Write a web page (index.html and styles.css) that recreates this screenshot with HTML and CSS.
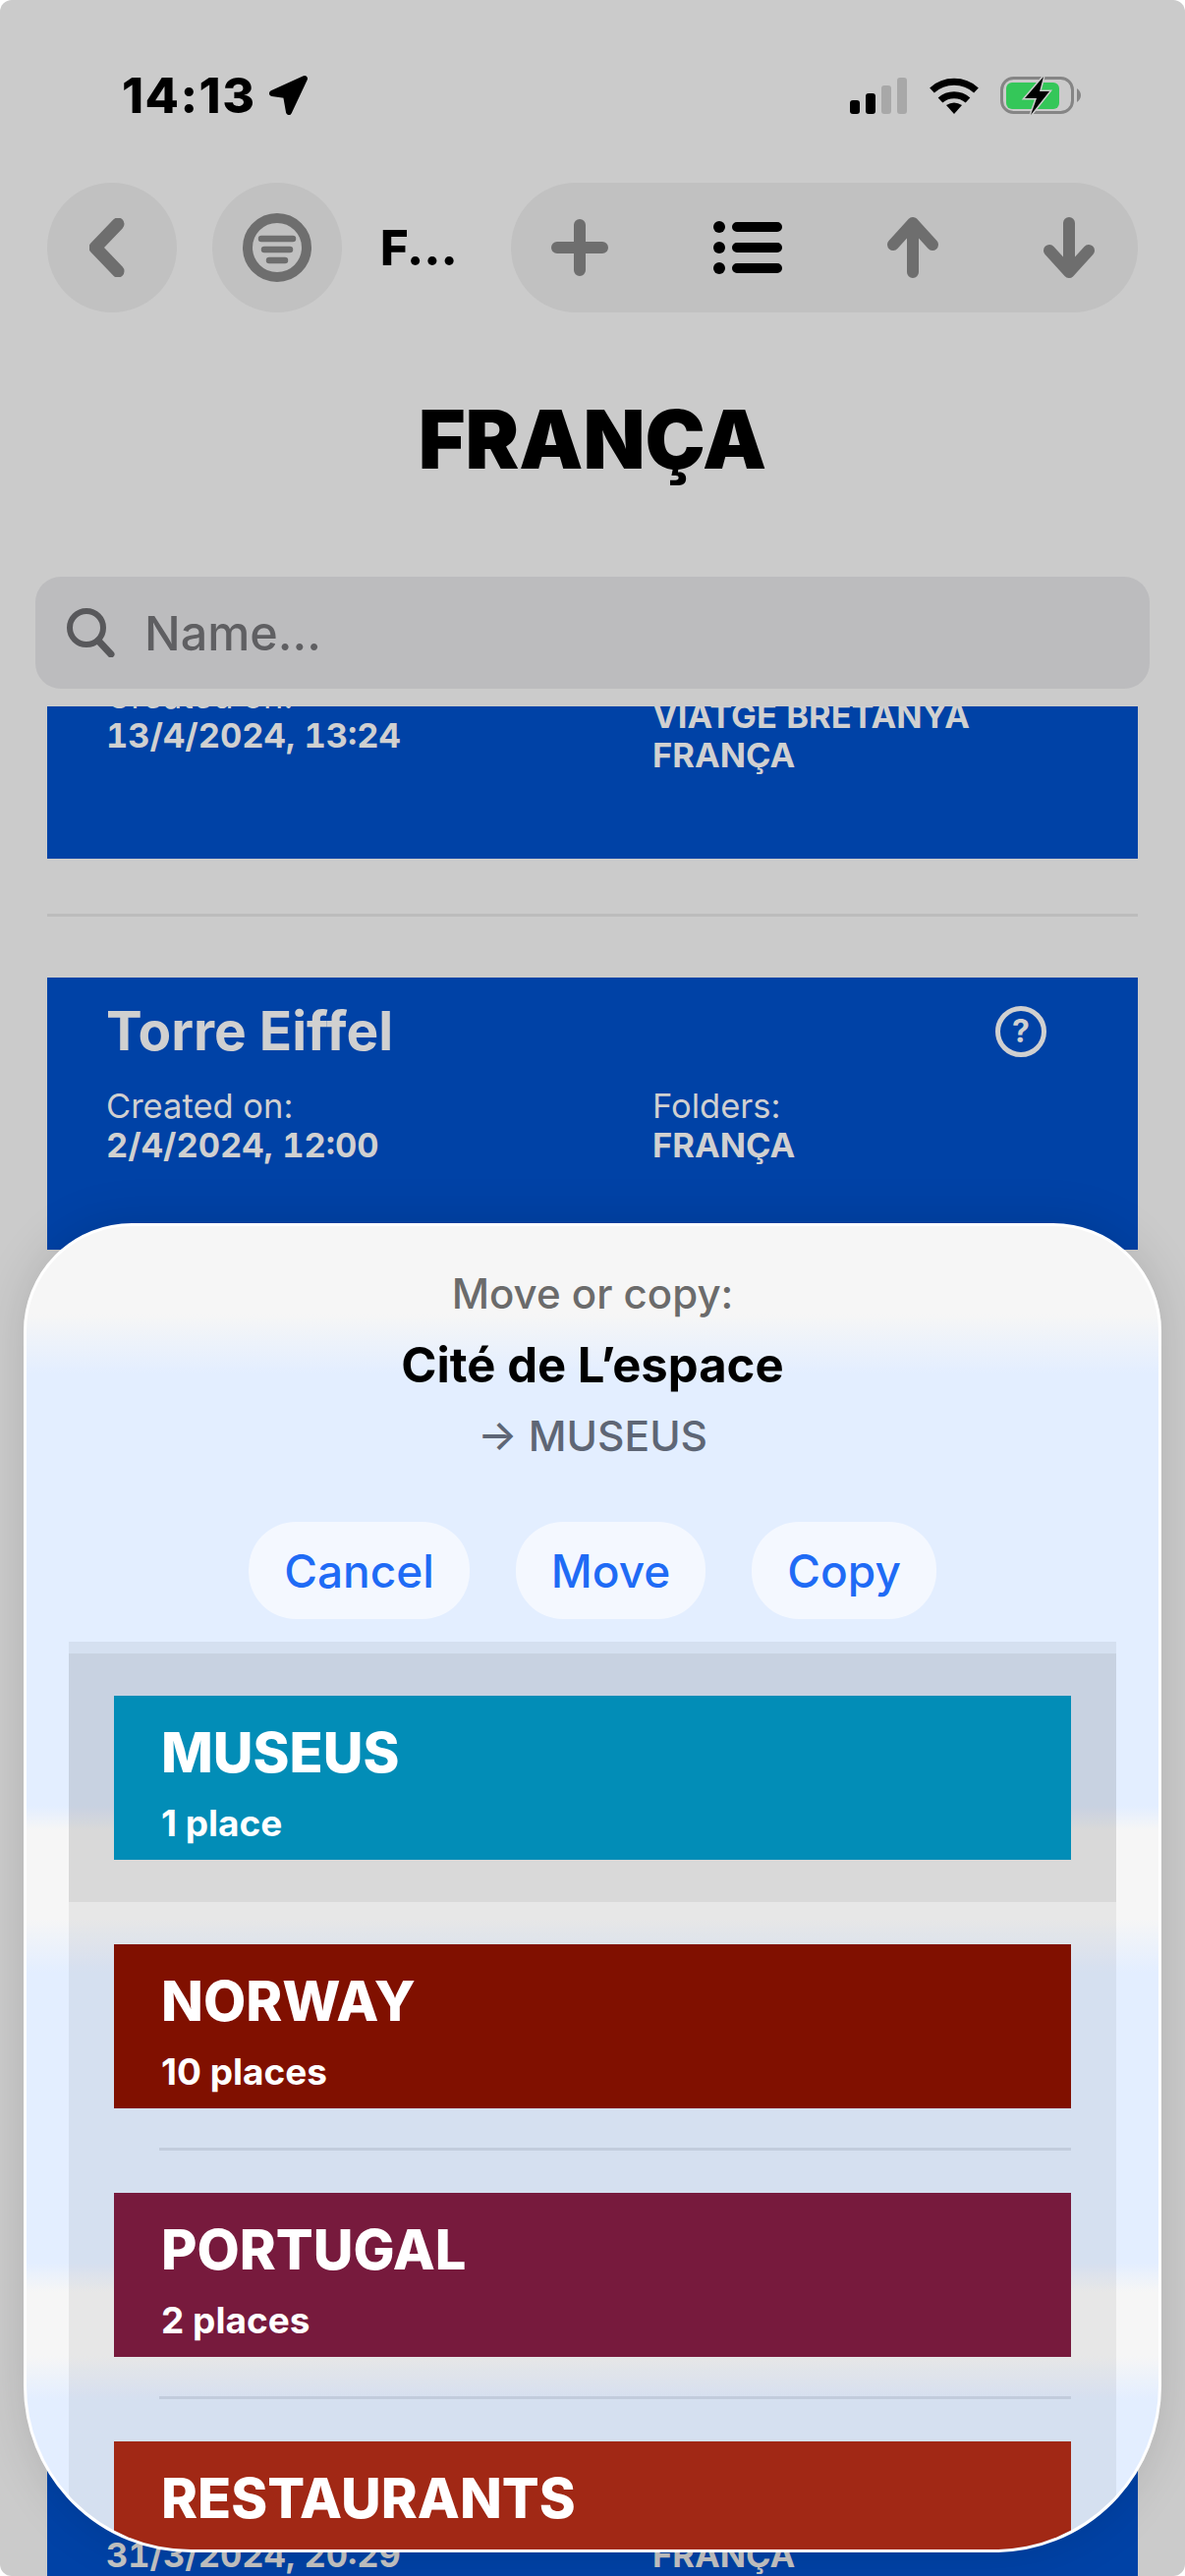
FILE: index.html
```html
<!DOCTYPE html>
<html lang="en">
<head>
    <meta charset="UTF-8">
    <meta name="viewport" content="width=device-width, initial-scale=1.0">
    <title>FRANÇA</title>
    <link rel="stylesheet" href="styles.css">
</head>
<body>
    <div class="screen">
        <!-- Status bar -->
        <div class="status">
            <div class="status-left">
                <span class="time">14:13</span>
                <svg class="loc" viewBox="0 0 42 42"><path d="M4 19 L37 4 L21 38 L18 21 Z" fill="#000" stroke="#000" stroke-width="6" stroke-linejoin="round"/></svg>
            </div>
            <div class="status-right">
                <div class="signal">
                    <span class="bar bar1"></span>
                    <span class="bar bar2"></span>
                    <span class="bar bar3"></span>
                    <span class="bar bar4"></span>
                </div>
                <svg class="wifi" viewBox="0 0 50 37">
                    <path d="M2.5 13 A33.5 33.5 0 0 1 47.5 13" fill="none" stroke="#000" stroke-width="7"/>
                    <path d="M11 23 A21 21 0 0 1 39 23" fill="none" stroke="#000" stroke-width="7"/>
                    <path d="M25 37 L17 28 Q25 23 33 28 Z" fill="#000"/>
                </svg>
                <svg class="battery" viewBox="0 0 84 42">
                    <rect x="1.5" y="3.5" width="72" height="35" rx="12" fill="none" stroke="#858585" stroke-width="3"/>
                    <rect x="6" y="8" width="54" height="27" rx="6" fill="#34c759"/>
                    <path d="M78 14 Q82 17 82 21 Q82 25 78 28 Z" fill="#858585"/>
                    <path d="M44 2 L25 24 L37 24 L31 41 L50 17 L40 17 Z" fill="#000" stroke="#cbcbcb" stroke-width="3" paint-order="stroke"/>
                </svg>
            </div>
        </div>

        <!-- Toolbar -->
        <div class="toolbar">
            <div class="round-btn">
                <svg class="icon-back" viewBox="0 0 36 60"><path d="M29 6 L6 30 L29 54" fill="none" stroke="#6e6e6e" stroke-width="13" stroke-linecap="round" stroke-linejoin="round"/></svg>
            </div>
            <div class="round-btn">
                <svg class="icon-filter" viewBox="0 0 70 70">
                    <circle cx="35" cy="35" r="30" fill="none" stroke="#6e6e6e" stroke-width="10"/>
                    <path d="M19 26 H51 M22 37 H48 M27 48 H43" fill="none" stroke="#6e6e6e" stroke-width="6.5" stroke-linecap="round"/>
                </svg>
            </div>
            <span class="toolbar-title">F...</span>
            <div class="pill">
                <svg class="icon-plus" viewBox="0 0 58 58"><path d="M29 6 V52 M6 29 H52" fill="none" stroke="#6e6e6e" stroke-width="12" stroke-linecap="round"/></svg>
                <svg class="icon-list" viewBox="0 0 70 54">
                    <circle cx="6" cy="6" r="6"/><circle cx="6" cy="27" r="6"/><circle cx="6" cy="48" r="6"/>
                    <path d="M24 6 H65 M24 27 H65 M24 48 H65" fill="none" stroke="#000" stroke-width="10" stroke-linecap="round"/>
                </svg>
                <svg class="icon-arrow" viewBox="0 0 52 62"><path d="M26 6 V56 M6 28 L26 6 L46 28" fill="none" stroke="#6e6e6e" stroke-width="12" stroke-linecap="round" stroke-linejoin="round"/></svg>
                <svg class="icon-arrow" viewBox="0 0 52 62"><path d="M26 6 V56 M6 34 L26 56 L46 34" fill="none" stroke="#6e6e6e" stroke-width="12" stroke-linecap="round" stroke-linejoin="round"/></svg>
            </div>
        </div>

        <h1 class="title">FRANÇA</h1>

        <div class="search">
            <svg class="icon-search" viewBox="0 0 50 50"><circle cx="21" cy="20" r="17" fill="none" stroke="#58585b" stroke-width="6"/><path d="M33 33 L46 47" fill="none" stroke="#58585b" stroke-width="7" stroke-linecap="round"/></svg>
            <span class="search-text">Name...</span>
        </div>

        <!-- Places list, scrolled -->
        <div class="places">
            <div class="place place-scrolled">
                <div class="meta">
                    <div class="meta-col">
                        <div class="meta-label">Created on:</div>
                        <div class="meta-value">13/4/2024, 13:24</div>
                    </div>
                    <div class="meta-col">
                        <div class="meta-label">Folders:</div>
                        <div class="meta-value">VIATGE BRETANYA</div>
                        <div class="meta-value">FRANÇA</div>
                    </div>
                </div>
            </div>
            <div class="place-line"></div>
            <div class="place">
                <div class="place-head">
                    <span class="place-name">Torre Eiffel</span>
                    <span class="help">?</span>
                </div>
                <div class="meta">
                    <div class="meta-col">
                        <div class="meta-label">Created on:</div>
                        <div class="meta-value">2/4/2024, 12:00</div>
                    </div>
                    <div class="meta-col">
                        <div class="meta-label">Folders:</div>
                        <div class="meta-value">FRANÇA</div>
                    </div>
                </div>
            </div>
            <div class="place-gap"></div>
            <div class="place place-last">
                <div class="meta">
                    <div class="meta-col">
                        <div class="meta-value">31/3/2024, 20:29</div>
                    </div>
                    <div class="meta-col">
                        <div class="meta-value">FRANÇA</div>
                    </div>
                </div>
            </div>
        </div>

        <!-- Move or copy sheet -->
        <div class="sheet">
            <div class="sheet-label">Move or copy:</div>
            <div class="sheet-name">Cité de L’espace</div>
            <div class="sheet-target">→ MUSEUS</div>
            <div class="sheet-buttons">
                <button class="sheet-btn">Cancel</button>
                <button class="sheet-btn">Move</button>
                <button class="sheet-btn">Copy</button>
            </div>
            <div class="folders">
                <div class="folder-row selected">
                    <div class="folder museus">
                        <div class="folder-name">MUSEUS</div>
                        <div class="folder-count">1 place</div>
                    </div>
                </div>
                <div class="folder-row">
                    <div class="folder norway">
                        <div class="folder-name">NORWAY</div>
                        <div class="folder-count">10 places</div>
                    </div>
                </div>
                <div class="folder-line"></div>
                <div class="folder-row">
                    <div class="folder portugal">
                        <div class="folder-name">PORTUGAL</div>
                        <div class="folder-count">2 places</div>
                    </div>
                </div>
                <div class="folder-line"></div>
                <div class="folder-row">
                    <div class="folder restaurants">
                        <div class="folder-name">RESTAURANTS</div>
                    </div>
                </div>
            </div>
        </div>
    </div>
</body>
</html>
```

FILE: styles.css
```css
body {
    margin: 0;
    background-color: #fff;
    font-family: Inter, "Liberation Sans", sans-serif;
}

.screen {
    position: relative;
    width: 1206px;
    height: 2622px;
    background-color: #cbcbcb;
    border-radius: 12px;
    overflow: hidden;
    display: flex;
    flex-direction: column;
}

/* Status bar */
.status {
    display: flex;
    justify-content: space-between;
    align-items: center;
    height: 44px;
    margin-top: 75px;
    padding: 0 104px 0 124px;
}

.status-left {
    display: flex;
    align-items: center;
    gap: 12px;
}

.time {
    font-size: 50px;
    line-height: 44px;
    font-weight: 800;
    letter-spacing: 1.5px;
    color: #000;
}

.loc {
    width: 42px;
    height: 42px;
}

.status-right {
    display: flex;
    align-items: center;
}

.signal {
    display: flex;
    align-items: flex-end;
    gap: 6px;
    height: 37px;
}

.bar {
    width: 10px;
    border-radius: 3px;
    background-color: #000;
}

.bar1 { height: 14px; }
.bar2 { height: 21px; }
.bar3 { height: 29px; background-color: #a8a8a8; }
.bar4 { height: 37px; background-color: #a8a8a8; }

.wifi {
    width: 50px;
    height: 37px;
    margin-left: 23px;
}

.battery {
    width: 84px;
    height: 42px;
    margin-left: 22px;
}

/* Toolbar */
.toolbar {
    display: flex;
    align-items: center;
    height: 132px;
    margin-top: 67px;
    padding: 0 48px;
}

.round-btn {
    display: flex;
    align-items: center;
    justify-content: center;
    width: 132px;
    height: 132px;
    margin-right: 36px;
    border-radius: 50%;
    background-color: #c1c1c1;
}

.icon-back {
    width: 36px;
    height: 60px;
    margin-right: 10px;
}

.icon-filter {
    width: 70px;
    height: 70px;
}

.toolbar-title {
    margin-left: 3px;
    font-size: 49px;
    font-weight: 800;
    color: #000;
}

.pill {
    display: flex;
    align-items: center;
    justify-content: space-between;
    box-sizing: border-box;
    width: 638px;
    height: 132px;
    margin-left: auto;
    padding: 0 44px 0 41px;
    border-radius: 66px;
    background-color: #c1c1c1;
}

.icon-plus {
    width: 58px;
    height: 58px;
}

.icon-list {
    width: 70px;
    height: 54px;
}

.icon-arrow {
    width: 52px;
    height: 62px;
}

.title {
    margin: 80px 0 0;
    font-size: 82px;
    line-height: 100px;
    font-weight: 900;
    text-align: center;
    color: #000;
}

/* Search */
.search {
    display: flex;
    align-items: center;
    gap: 30px;
    height: 114px;
    margin: 89px 36px 0;
    padding-left: 31px;
    border-radius: 26px;
    background-color: #bcbcbe;
}

.icon-search {
    width: 50px;
    height: 50px;
}

.search-text {
    font-size: 48.5px;
    font-weight: 500;
    color: #5f5f62;
}

/* Places list */
.places {
    flex: 1;
    min-height: 0;
    margin-top: 18px;
    padding: 0 48px;
    overflow: hidden;
}

.place {
    padding: 23px 60px 86px;
    background-color: #0042a6;
    color: #d0d0d0;
}

.place-scrolled {
    margin-top: -50px;
    padding-top: 0;
    padding-bottom: 85px;
}

.place-last {
    padding-top: 154px;
    color: #c4c4c4;
}

.place-line {
    height: 3px;
    margin: 56px 0 62px;
    background-color: #bcbcbc;
}

.place-gap {
    height: 1155px;
}

.place-head {
    display: flex;
    justify-content: space-between;
    align-items: center;
    padding-right: 33px;
}

.place-name {
    font-size: 55px;
    line-height: 63px;
    font-weight: 700;
}

.help {
    display: flex;
    align-items: center;
    justify-content: center;
    width: 42px;
    height: 42px;
    border: 5px solid #d0d0d0;
    border-radius: 50%;
    font-size: 32px;
    font-weight: 700;
}

.meta {
    display: flex;
    align-items: center;
    margin-top: 25px;
}

.place-scrolled .meta,
.place-last .meta {
    margin-top: 0;
}

.meta-col {
    flex: none;
    width: 556px;
}

.meta-col + .meta-col {
    width: 434px;
}

.meta-label {
    font-size: 34.5px;
    line-height: 40px;
}

.meta-value {
    font-size: 34.5px;
    line-height: 40px;
    font-weight: 700;
    font-variant-numeric: tabular-nums;
}

/* Sheet */
.sheet {
    position: absolute;
    top: 1245px;
    left: 24px;
    right: 24px;
    bottom: 24px;
    display: flex;
    flex-direction: column;
    align-items: center;
    box-sizing: border-box;
    padding-top: 45px;
    border: 3px solid #fff;
    border-radius: 110px 110px 170px 170px;
    overflow: hidden;
    text-align: center;
    background: linear-gradient(to bottom,
        #f6f6f6 0, #f6f6f6 90px, #e3eeff 150px,
        #e3eeff 590px, #f6f6f6 615px,
        #f6f6f6 705px, #e3eeff 760px,
        #e3eeff 1055px, #f6f6f6 1085px,
        #f6f6f6 1150px, #e3eeff 1195px);
    box-shadow: 0 0 50px rgba(0, 0, 0, 0.13);
}

.sheet-label {
    font-size: 42px;
    line-height: 48px;
    font-weight: 500;
    color: #6b6b6b;
}

.sheet-name {
    margin-top: 21px;
    font-size: 49px;
    line-height: 56px;
    font-weight: 700;
    color: #000;
}

.sheet-target {
    margin-top: 19px;
    font-size: 42.5px;
    line-height: 50px;
    font-weight: 500;
    color: #5e6675;
}

.sheet-buttons {
    display: flex;
    gap: 47px;
    margin-top: 62px;
}

.sheet-btn {
    height: 99px;
    padding: 0 36px;
    border: none;
    border-radius: 48px;
    background-color: #f4f8ff;
    font-family: inherit;
    font-size: 46px;
    font-weight: 500;
    color: #1f6bf5;
}

.folders {
    flex: 1;
    min-height: 0;
    align-self: stretch;
    margin: 23px 43px 0;
    padding-top: 12px;
    background-color: rgba(0, 0, 0, 0.06);
    text-align: left;
}

.folder-row {
    padding: 43px 46px;
}

.folder-row.selected {
    background-color: rgba(0, 0, 0, 0.06);
}

.folder-line {
    height: 3px;
    margin: -3px 46px 0 92px;
    background-color: #c2ccdc;
}

.folder {
    box-sizing: border-box;
    height: 167px;
    padding: 24px 48px 0;
    color: #fff;
}

.folder-name {
    font-size: 56px;
    line-height: 68px;
    font-weight: 800;
}

.folder-count {
    margin-top: 18px;
    font-size: 37px;
    line-height: 40px;
    font-weight: 700;
}

.museus { background-color: #028db7; }
.norway { background-color: #801000; }
.portugal { background-color: #771a3d; }
.restaurants { background-color: #a12815; }
```
